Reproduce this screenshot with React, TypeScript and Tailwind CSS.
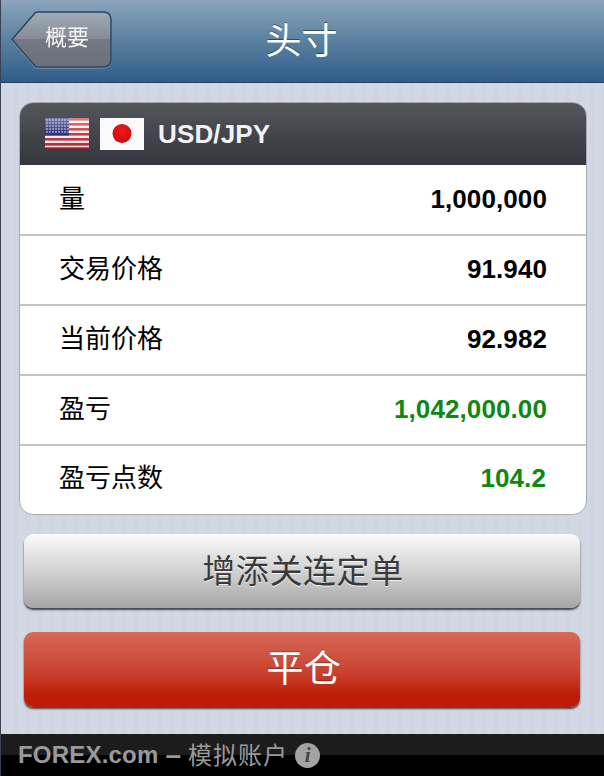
const cjk = "font-['Liberation_Sans','Noto_Sans_CJK_SC',sans-serif]";

function Row({ label, value, green, last, pr, first }: { label: string; value: string; green?: boolean; last?: boolean; pr?: string; first?: boolean }) {
  return (
    <div className={`flex items-center justify-between pl-[39px] ${pr ?? "pr-[39px]"} ${last ? "h-[68px] pb-[4px]" : `${first ? "h-[71px] pb-[1px]" : "h-[70px] pb-[3px]"} border-b-2 border-[#c4c4c4]`}`}>
      <span className="text-[26px] leading-none text-black">{label}</span>
      <span className={`text-[26px] font-bold leading-none tracking-[0.1px] ${green ? "text-[#0f8712]" : "text-black"}`}>{value}</span>
    </div>
  );
}

function UsFlag() {
  return (
    <svg width="44" height="32" viewBox="0 0 44 32" className="shrink-0">
      <defs>
        <linearGradient id="usgloss" x1="0" y1="0" x2="0" y2="1">
          <stop offset="0%" stopColor="#fff" stopOpacity="0.4" />
          <stop offset="50%" stopColor="#fff" stopOpacity="0.08" />
          <stop offset="100%" stopColor="#000" stopOpacity="0.12" />
        </linearGradient>
      </defs>
      <rect width="44" height="32" fill="#f4f0f0" />
      {[0, 5, 10, 15, 20, 25].map((y) => (
        <rect key={y} y={y} width="44" height="2.6" fill="#c22a35" />
      ))}
      <rect y="29.4" width="44" height="2.6" fill="#a01c28" />
      <rect width="24" height="17.5" fill="#1f2170" />
      {[2, 5, 8, 11, 14].map((y) =>
        [2, 5, 8, 11, 14, 17, 20, 23].map((x) => <circle key={`${x}-${y}`} cx={x} cy={y} r="0.8" fill="#e2e4f4" />)
      )}
      <rect width="44" height="32" fill="url(#usgloss)" />
    </svg>
  );
}

function JpFlag() {
  return (
    <svg width="44" height="32" viewBox="0 0 44 32" className="shrink-0">
      <defs>
        <radialGradient id="jp" cx="50%" cy="35%" r="65%">
          <stop offset="0%" stopColor="#f01818" />
          <stop offset="100%" stopColor="#c80d14" />
        </radialGradient>
      </defs>
      <rect width="44" height="32" fill="#fafafa" />
      <circle cx="22" cy="15.5" r="9.5" fill="url(#jp)" />
    </svg>
  );
}

export default function App() {
  return (
    <div className={`flex h-[776px] w-[604px] flex-col overflow-hidden border-l border-[#3a4356] bg-[#d0d6e2] bg-[repeating-linear-gradient(90deg,#cfd5e1_0px,#cfd5e1_6px,#d3d8e4_6px,#d3d8e4_12px)] ${cjk}`}>
      <header className="relative flex h-[83px] shrink-0 items-center justify-center border-b border-[#24425f] bg-[linear-gradient(180deg,#8ba4bb_0%,#5f84a3_45%,#2f5d88_100%)]">
        <div className="absolute left-[10px] top-[11px] h-[57px] w-[101px] drop-shadow-[0_1px_0_rgba(255,255,255,0.25)]">
          <svg width="101" height="57" viewBox="0 0 101 57" className="absolute inset-0">
            <defs>
              <linearGradient id="back" x1="0" y1="0" x2="0" y2="1">
                <stop offset="0%" stopColor="#a2abb6" />
                <stop offset="48%" stopColor="#858c97" />
                <stop offset="50%" stopColor="#737883" />
                <stop offset="100%" stopColor="#6b707b" />
              </linearGradient>
            </defs>
            <path d="M1 28.5 L24 2 Q25 1 27 1 L92 1 Q100 1 100 9 L100 48 Q100 56 92 56 L27 56 Q25 56 24 55 Z" fill="url(#back)" stroke="#2c4660" strokeWidth="1.5" />
          </svg>
          <span className="absolute left-[34px] top-[13px] text-[22px] leading-[28px] text-[#f4f4f4]">概要</span>
        </div>
        <h1 className="pr-[2px] pt-[1px] text-[36px] font-normal leading-none text-white [text-shadow:0_-1px_0_rgba(0,0,0,0.45)]">头寸</h1>
      </header>

      <main className="flex min-h-0 flex-1 flex-col pl-[18px] pr-[17px] pt-[19px]">
        <section className="overflow-hidden rounded-[14px] border border-[#a9aaac] bg-white">
          <div className="flex h-[62px] items-center bg-[linear-gradient(180deg,#53565d_0%,#33363d_100%)] pl-[25px]">
            <UsFlag />
            <div className="ml-[11px]"><JpFlag /></div>
            <span className="ml-[14px] text-[26px] font-bold leading-none tracking-[0.15px] text-[#f2f2f2]">USD/JPY</span>
          </div>
          <Row first label="量" value="1,000,000" pr="pr-[39px]" />
          <Row label="交易价格" value="91.940" />
          <Row label="当前价格" value="92.982" />
          <Row label="盈亏" value="1,042,000.00" green />
          <Row label="盈亏点数" value="104.2" green last pr="pr-[40px]" />
        </section>

        <button className="ml-[5px] mr-[7px] mt-[19px] h-[74px] shrink-0 rounded-[9px] bg-[linear-gradient(180deg,#fafafa_0%,#d2d2d2_50%,#a6a6a8_100%)] pl-[2px] text-[33px] leading-none tracking-[0.6px] text-[#3a3a3a] shadow-[0_2px_2px_rgba(30,30,40,0.8)] [text-shadow:0_1px_0_rgba(255,255,255,0.8)]">
          增添关连定单
        </button>
        <button className="ml-[5px] mr-[7px] mt-[24px] h-[75px] shrink-0 rounded-[9px] bg-[linear-gradient(180deg,#d7695a_0%,#c9412c_55%,#bd1c05_85%,#bd1c05_100%)] pl-[4px] text-[37px] leading-none tracking-[0.5px] text-white shadow-[0_2px_2px_rgba(30,30,40,0.8)] [text-shadow:0_-1px_0_rgba(0,0,0,0.3)]">
          平仓
        </button>
      </main>

      <footer className="flex h-[42px] shrink-0 items-center bg-[linear-gradient(180deg,#1c1c1c_0%,#1c1c1c_50%,#000_50%,#000_100%)] pl-[17px] text-[#9a9a9a]">
        <span className="text-[24px] font-bold leading-none tracking-[0.2px]">FOREX.com</span>
        <span className="ml-[7px] text-[24px] leading-none tracking-[1px]">
          <b className="text-[28px] font-bold">–</b>
          <span className="ml-[6px]">模拟账户</span>
        </span>
        <span className="ml-[7px] flex h-[25px] w-[25px] items-center justify-center rounded-full bg-[#a3a3a3] font-['Liberation_Serif',serif] text-[21px] font-bold italic leading-none text-[#444]">i</span>
      </footer>
    </div>
  );
}
